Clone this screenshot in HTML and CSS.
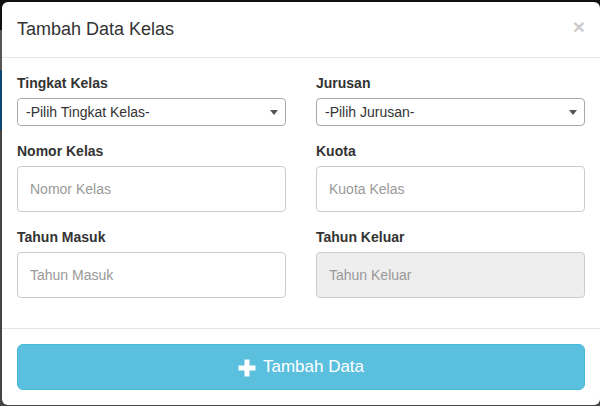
FILE: index.html
```html
<!DOCTYPE html>
<html lang="id">
<head>
<meta charset="utf-8">
<title>Tambah Data Kelas</title>
<link rel="stylesheet" href="styles.css">
</head>
<body>
<div class="backdrop"></div>
<div class="modal">
  <div class="modal-header">
    <h4 class="modal-title">Tambah Data Kelas</h4>
    <button class="close" type="button">&times;</button>
  </div>
  <div class="modal-body">
    <div class="form-grid">
      <div class="form-group">
        <label class="label">Tingkat Kelas</label>
        <div class="select-wrap">
          <select class="select"><option>-Pilih Tingkat Kelas-</option></select>
        </div>
      </div>
      <div class="form-group">
        <label class="label">Jurusan</label>
        <div class="select-wrap">
          <select class="select"><option>-Pilih Jurusan-</option></select>
        </div>
      </div>
      <div class="form-group">
        <label class="label">Nomor Kelas</label>
        <input class="input" type="text" placeholder="Nomor Kelas">
      </div>
      <div class="form-group">
        <label class="label">Kuota</label>
        <input class="input" type="text" placeholder="Kuota Kelas">
      </div>
      <div class="form-group">
        <label class="label">Tahun Masuk</label>
        <input class="input" type="text" placeholder="Tahun Masuk">
      </div>
      <div class="form-group">
        <label class="label">Tahun Keluar</label>
        <input class="input" type="text" placeholder="Tahun Keluar" disabled>
      </div>
    </div>
  </div>
  <div class="modal-footer">
    <button class="btn-info" type="button">
      <svg class="plus" viewBox="0 0 18 18" width="18" height="18" aria-hidden="true"><path d="M6.5 0.5h5v6h6v5h-6v6h-5v-6h-6v-5h6z" fill="#fff"/></svg>
      <span>Tambah Data</span>
    </button>
  </div>
</div>
</body>
</html>
```
FILE: styles.css
```css
html, body {
  margin: 0;
  padding: 0;
  height: 100%;
  overflow: hidden;
}
body {
  font-family: "Liberation Sans", Arial, sans-serif;
  font-size: 14px;
  color: #333;
  background: #444;
}
.backdrop {
  position: fixed;
  inset: 0;
  background: linear-gradient(to bottom, #111 0, #111 30px, #555 30px, #555 70px, #0d4670 70px, #0d4670 130px, #454545 130px);
}
.modal {
  position: fixed;
  top: 2px;
  left: 2px;
  width: 598px;
  background: #fff;
  border-radius: 6px;
  box-sizing: border-box;
}
.modal-header {
  display: flex;
  align-items: center;
  justify-content: space-between;
  padding: 15px;
  border-bottom: 1px solid #e5e5e5;
}
.modal-title {
  margin: 0;
  font-size: 18px;
  font-weight: normal;
  line-height: 25px;
  color: #333;
}
.close {
  padding: 0;
  margin: -6px 0 0;
  border: 0;
  background: none;
  font-family: "Liberation Sans", Arial, sans-serif;
  font-size: 21px;
  font-weight: bold;
  line-height: 1;
  color: #000;
  opacity: 0.2;
}
.modal-body {
  padding: 15px;
}
.form-grid {
  display: grid;
  grid-template-columns: 269px 269px;
  column-gap: 30px;
}
.form-group {
  margin-bottom: 15px;
}
.label {
  display: block;
  font-weight: bold;
  line-height: 20px;
  margin-bottom: 5px;
}
.select-wrap {
  position: relative;
}
.select-wrap::after {
  content: "";
  position: absolute;
  right: 8px;
  top: 12px;
  border-left: 4px solid transparent;
  border-right: 4px solid transparent;
  border-top: 5px solid #555;
  pointer-events: none;
}
.select {
  appearance: none;
  -webkit-appearance: none;
  display: block;
  width: 100%;
  height: 28px;
  box-sizing: border-box;
  padding: 0 24px 0 8px;
  border: 1px solid #a9a9a9;
  border-radius: 4px;
  background: #fff;
  font-family: "Liberation Sans", Arial, sans-serif;
  font-size: 14px;
  color: #333;
}
.input {
  display: block;
  width: 100%;
  height: 46px;
  box-sizing: border-box;
  padding: 0 12px;
  border: 1px solid #ccc;
  border-radius: 4px;
  background: #fff;
  font-family: "Liberation Sans", Arial, sans-serif;
  font-size: 14px;
  color: #555;
}
.input::placeholder {
  color: #999;
}
.input:disabled {
  background: #eee;
}
.modal-footer {
  padding: 15px;
  border-top: 1px solid #e5e5e5;
}
.btn-info {
  display: flex;
  align-items: center;
  justify-content: center;
  width: 100%;
  height: 46px;
  box-sizing: border-box;
  padding: 10px 16px;
  border: 1px solid #46b8da;
  border-radius: 6px;
  background: #5bc0de;
  color: #fff;
  font-family: "Liberation Sans", Arial, sans-serif;
  font-size: 17px;
  line-height: 24px;
}
.plus {
  display: block;
  margin-right: 7px;
  margin-top: 1px;
}
```
